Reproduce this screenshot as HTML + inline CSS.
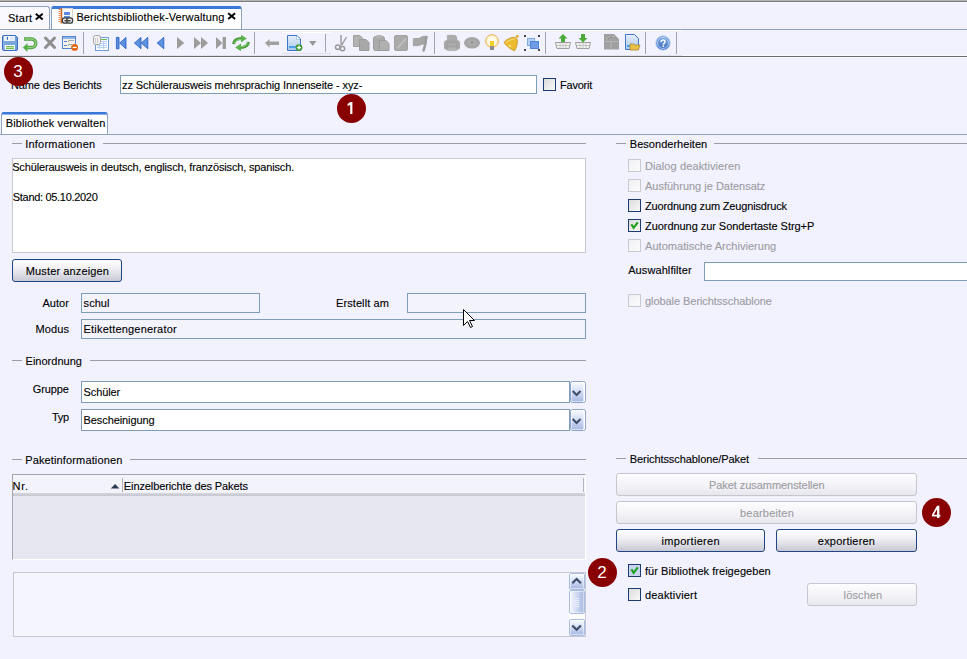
<!DOCTYPE html>
<html><head><meta charset="utf-8">
<style>
html,body{margin:0;padding:0;}
body{width:967px;height:659px;overflow:hidden;position:relative;background:#F2F2FE;font-family:"Liberation Sans",sans-serif;font-size:11px;color:#000;}
.a{position:absolute;}
.t{position:absolute;white-space:nowrap;line-height:13px;font-size:11px;-webkit-text-stroke:0.12px currentColor;}
.dis{color:#9c9ca2;}
.inp{position:absolute;box-sizing:border-box;border:1px solid #7F9DB9;background:#fff;}
.ro{background:#F3F3FC;}
.gl{position:absolute;height:1px;background:#9c9ca4;}
.cb{position:absolute;box-sizing:border-box;width:13px;height:13px;border:1px solid #1C3B6E;background:linear-gradient(135deg,#dcdcdc,#f8f8f8);}
.cbd{border-color:#c9c9d2;background:linear-gradient(135deg,#f0f0f4,#fbfbfd);}
.btn{position:absolute;box-sizing:border-box;border:1px solid #1F4582;border-radius:3px;background:linear-gradient(#ffffff,#f2f2f6 35%,#c9c9d5);}
.btnd{border-color:#c6c6cf;background:linear-gradient(#fdfdff,#f4f4f8 50%,#e7e7ee);color:#8f8f9c;}
.sep{position:absolute;top:32px;width:1px;height:22px;background:#a6a6a6;}
.ic{position:absolute;top:35px;width:16px;height:16px;}
.badge{position:absolute;width:29.5px;height:29.5px;border-radius:50%;background:#880000;}
.dg{position:absolute;color:#fff;font-size:17px;line-height:17px;}
</style></head><body>
<!-- top line -->
<div class="a" style="left:0;top:0;width:967px;height:1px;background:#b5b5b8"></div><div class="a" style="left:0;top:1px;width:967px;height:1px;background:#7b7b7b"></div><div class="a" style="left:0;top:2px;width:967px;height:1px;background:#fbfbff"></div>
<!-- tabs -->
<div class="a" style="left:0;top:6px;width:50px;height:24px;box-sizing:border-box;border:1px solid #8FA4C0;border-left:none;border-bottom:none;border-top-right-radius:3px;background:#F9F9FE"></div>
<div class="a" style="left:51px;top:6px;width:191px;height:24px;box-sizing:border-box;border:1px solid #8FA4C0;border-top:3px solid #3A78D8;border-bottom:none;border-radius:3px 3px 0 0;background:#fff"></div>
<div class="a" style="left:0;top:29px;width:967px;height:1px;background:#8FA3BF"></div>
<!-- toolbar -->
<div class="a" style="left:0;top:30px;width:682px;height:1px;background:#fff"></div>
<div class="a" style="left:0;top:55px;width:682px;height:1px;background:#e2e2ee"></div><div class="a" style="left:682px;top:55px;width:285px;height:1px;background:#fafaff"></div>
<div class="a" style="left:0;top:56px;width:967px;height:1px;background:#6a6a6a"></div>
<div class="a" style="left:0;top:57px;width:967px;height:1px;background:#f8f8ff"></div>

<svg class="a" style="left:0;top:0" width="967" height="60" viewBox="0 0 967 60">
<defs>
<linearGradient id="gdoc" x1="0" y1="0" x2="0" y2="1"><stop offset="0" stop-color="#e6eefa"/><stop offset="1" stop-color="#a9c8ef"/></linearGradient>
<linearGradient id="gblue" x1="0" y1="0" x2="1" y2="0"><stop offset="0" stop-color="#9cc0ee"/><stop offset="1" stop-color="#2e6ad0"/></linearGradient>
</defs>
<!-- frame -->
<rect x="282" y="32" width="49" height="1" fill="#ffffff"/>
<rect x="282" y="53" width="49" height="1" fill="#dcdcea"/>
<!-- separators -->
<g fill="#a4a4a8">
<rect x="83" y="32" width="1" height="22"/>
<rect x="254" y="32" width="1" height="22"/>
<rect x="325" y="34" width="1" height="18"/>
<rect x="434" y="32" width="1" height="22"/>
<rect x="545" y="32" width="1" height="22"/>
<rect x="645" y="32" width="1" height="22"/>
<rect x="676" y="32" width="1" height="22"/>
</g>
<!-- save -->
<path d="M2.5 36.8 Q2.5 35.5 3.8 35.5 H15.5 L17.5 37.5 V49.2 Q17.5 50.5 16.2 50.5 H3.8 Q2.5 50.5 2.5 49.2 Z" fill="#6f9ddc" stroke="#3b6cc0"/>
<rect x="3.5" y="36.5" width="1" height="13" fill="#a8c6ee"/>
<rect x="4" y="36" width="11" height="5" fill="#f2f6fc"/>
<rect x="10" y="36.5" width="5" height="4" fill="#e0eaf8"/>
<rect x="6.8" y="37" width="1.2" height="2.8" fill="#3b6cc0"/>
<rect x="4" y="41" width="12.5" height="4" fill="#7aa4dc"/>
<rect x="4.9" y="45" width="10" height="4.8" fill="#fbfdff"/>
<rect x="6" y="46" width="8" height="1.1" fill="#74bc46"/>
<rect x="6" y="47.1" width="8" height="0.8" fill="#c4e4b4"/>
<rect x="6" y="47.9" width="8" height="1.1" fill="#74bc46"/>
<!-- undo -->
<path d="M24 39 H31.5 A4.25 4.25 0 0 1 31.5 47.5 H26.5" fill="none" stroke="#4e9e40" stroke-width="3.4"/>
<path d="M24.5 39 H31.5 A4.25 4.25 0 0 1 31.5 47.5 H26.5" fill="none" stroke="#8ccf78" stroke-width="1.6"/>
<polygon points="27.5,43 22.8,47.5 27.5,52" fill="#5aae4a"/>
<!-- X -->
<path d="M45.5 38 L54.5 47.5 M54.5 38 L45.5 47.5" stroke="#8e8e8e" stroke-width="3" stroke-linecap="round"/>
<!-- form minus -->
<rect x="62.5" y="36.5" width="13" height="12" fill="#f6f2e8" stroke="#5585d0"/>
<rect x="63" y="37" width="12" height="2" fill="#8fb4e8"/>
<rect x="64" y="41" width="3" height="1" fill="#4f82d8"/>
<rect x="64" y="45" width="3" height="1" fill="#4f82d8"/>
<path d="M68.5 42 V40.5 H74 M68.5 46 V44.5 H72" fill="none" stroke="#a8a8a8"/>
<circle cx="74.6" cy="47.4" r="3.4" fill="#e0620e"/>
<rect x="72.6" y="46.8" width="4" height="1.3" fill="#fff"/>
<!-- table -->
<rect x="95.5" y="37.5" width="13" height="13" fill="#fbfcff" stroke="#6f9fd8"/>
<rect x="100" y="39" width="7" height="1" fill="#6cbc58"/>
<path d="M97 41.5 H107 M97 43.5 H107 M97 45.5 H107 M97 47.5 H107 M99.5 41 V49 M103.5 41 V49" stroke="#a8c6ee" stroke-width="0.8"/>
<rect x="93.5" y="35.5" width="7" height="9" rx="2" fill="#f2f2f2" stroke="#a4a4a4"/>
<path d="M95.5 38 V43 M97.5 38 V43" stroke="#c8c8c8" stroke-width="0.9"/>
<!-- nav -->
<g fill="#5a92de" stroke="#2058c0" stroke-width="0.8" stroke-linejoin="round">
<rect x="116.4" y="37.4" width="2.6" height="11.4"/>
<polygon points="126,37.4 119.6,43 126,48.8"/>
<polygon points="141,37.4 134.4,43 141,48.8"/>
<polygon points="147.8,37.4 141.2,43 147.8,48.8"/>
<polygon points="163.8,37.4 157.2,43 163.8,48.8"/>
</g>
<g fill="#9c9c9c">
<polygon points="177,37 184.2,43 177,49"/>
<polygon points="194,37 201,43 194,49"/>
<polygon points="201,37 208,43 201,49"/>
<polygon points="216,37 222.4,43 216,49"/>
<rect x="222.6" y="37" width="3.4" height="12"/>
</g>
<!-- refresh -->
<path d="M233.6 44.2 C234 40.2 237 38.6 241.6 38.6" fill="none" stroke="#4a9e3e" stroke-width="3"/>
<path d="M234.4 43.6 C234.8 40.6 237.2 39.4 241.6 39.4" fill="none" stroke="#8fd47a" stroke-width="1"/>
<polygon points="241,34.8 246.8,38.6 241,42.4" fill="#5eb24e"/>
<path d="M248.4 41.8 C248 45.8 245 47.4 240.4 47.4" fill="none" stroke="#4a9e3e" stroke-width="3"/>
<path d="M247.6 42.4 C247.2 45.4 244.8 46.6 240.4 46.6" fill="none" stroke="#8fd47a" stroke-width="1"/>
<polygon points="241,43.6 235.2,47.4 241,51.2" fill="#5eb24e"/>
<!-- back arrow -->
<polygon points="265,43 269.5,39 269.5,41.5 279,41.5 279,45 269.5,45 269.5,47.5" fill="#a0a0a0"/>
<!-- doc plus -->
<path d="M287.5 35.5 H297 L300.5 39 V50.5 H287.5 Z" fill="url(#gdoc)" stroke="#3f76c8"/>
<path d="M296.5 36 V39.5 H300" fill="#fff" stroke="#9cc0ee" stroke-width="0.8"/>
<rect x="289" y="46" width="8" height="2" fill="#4aa2ea"/>
<circle cx="299" cy="47.6" r="3.4" fill="#3e9a30"/>
<path d="M299 45.6 V49.6 M297 47.6 H301" stroke="#fff" stroke-width="1.3"/>
<polygon points="309,41 316.5,41 312.75,46" fill="#989898"/>
<!-- scissors -->
<path d="M341 35 V45.5 M346.5 37 L341.5 45.5" stroke="#9a9a9a" stroke-width="1.4"/>
<circle cx="337.7" cy="47.3" r="2.2" fill="none" stroke="#9a9a9a" stroke-width="1.5"/>
<circle cx="342.5" cy="48.6" r="2.2" fill="none" stroke="#9a9a9a" stroke-width="1.5"/>
<!-- copy -->
<path d="M353.5 35.5 H360 L363 38.5 V46.5 H353.5 Z" fill="#b2b2b2" stroke="#a0a0a0"/>
<path d="M359.5 39.5 H366 L369 42.5 V50.5 H359.5 Z" fill="#a8a8a8" stroke="#9a9a9a"/>
<!-- paste -->
<rect x="373.5" y="36.5" width="11" height="14" rx="2" fill="#aaaaaa" stroke="#9c9c9c"/>
<rect x="376" y="35" width="6" height="3" rx="1" fill="#b4b4b4"/>
<path d="M379.5 40.5 H386 L389 43.5 V50.5 H379.5 Z" fill="#b0b0b0" stroke="#9c9c9c"/>
<!-- edit doc -->
<rect x="394.5" y="35.5" width="13" height="15" rx="1.5" fill="#ababab" stroke="#a2a2a2"/>
<path d="M397.5 48 L406 38.5" stroke="#c4c4c4" stroke-width="1.2"/>
<!-- flag -->
<path d="M413.3 38.6 L418.8 38.3 C420.5 37.9 421.2 36.5 423.2 36.2 L427.6 36.4 L425.6 44 L421.6 44.4 C420 44.9 419 45.8 417.5 45.8 L413.2 45.8 Z" fill="#a6a6a6" stroke="#999" stroke-width="0.6"/>
<path d="M425.9 37.4 C426 42 424.8 47 423.6 50.4" fill="none" stroke="#9c9c9c" stroke-width="2.6" stroke-linecap="round"/>
<!-- printer -->
<path d="M447.3 35.3 H453.8 Q456.9 35.3 456.9 38.6 V42.5 H447.3 Z" fill="#acacac" stroke="#9c9c9c" stroke-width="0.6"/>
<rect x="444" y="40.2" width="16" height="9.5" rx="2.6" fill="#a6a6a6"/>
<rect x="447.4" y="42.2" width="9.2" height="4.8" fill="#ababab" stroke="#9a9a9a" stroke-width="0.5"/>
<rect x="447.2" y="47" width="9.6" height="3.6" rx="0.8" fill="#b2b2b2" stroke="#9a9a9a" stroke-width="0.5"/>
<!-- disc -->
<ellipse cx="472" cy="42.8" rx="8" ry="5.8" fill="#a6a6a6"/>
<ellipse cx="472" cy="42.8" rx="5.6" ry="4" fill="#ababab" stroke="#9c9c9c" stroke-width="0.5"/>
<circle cx="472" cy="42.3" r="0.9" fill="#7c7c7c"/>
<!-- bulb -->
<circle cx="492" cy="41" r="6.3" fill="#fff6d0" stroke="#f0a840" stroke-width="1"/>
<circle cx="492" cy="41" r="4.3" fill="#fffbe8"/>
<rect x="490" y="41" width="4" height="5" fill="#f2d028"/>
<rect x="490" y="46" width="4" height="4" fill="#8c8c8c"/>
<!-- bell -->
<path d="M504 42.3 C506.5 39.3 510.5 37.4 514.8 37.2 L517.2 39.4 C517.8 43 516.8 47 514.6 50.8 C511 49.5 506.5 46.5 504 42.3 Z" fill="#ecbc30" stroke="#c89020" stroke-width="0.8"/>
<path d="M506 42.5 C508.5 40.5 511.5 39.3 514.5 39" stroke="#f8e080" stroke-width="1" fill="none"/>
<circle cx="517.3" cy="36.4" r="1.4" fill="#e0a820"/>
<ellipse cx="509.8" cy="46" rx="1.7" ry="1.3" fill="#f4d870"/>
<!-- selection -->
<rect x="527.5" y="38.5" width="7" height="7" fill="#b4d0f4" stroke="#80aae6"/>
<rect x="530.5" y="41.5" width="8" height="7" fill="#6f9ee6" stroke="#4f84d8"/>
<g fill="#444"><rect x="524" y="35" width="2" height="2"/><rect x="538" y="35" width="2" height="2"/><rect x="524" y="49" width="2" height="2"/><rect x="538" y="49" width="2" height="2"/></g>
<!-- basket up -->
<path d="M555.5 42.5 H570.5 L569 48.5 H557 Z" fill="#f4f4f4" stroke="#9c9c9c"/>
<path d="M557 45.5 H569 M560 42.5 V48.5 M563 42.5 V48.5 M566 42.5 V48.5" stroke="#bcbcbc" stroke-width="0.8"/>
<polygon points="563,34 567.5,38.5 565,38.5 565,42 561,42 561,38.5 558.5,38.5" fill="#4caa38"/>
<!-- basket down -->
<path d="M575.5 42.5 H590.5 L589 48.5 H577 Z" fill="#f4f4f4" stroke="#9c9c9c"/>
<path d="M577 45.5 H589 M580 42.5 V48.5 M583 42.5 V48.5 M586 42.5 V48.5" stroke="#bcbcbc" stroke-width="0.8"/>
<polygon points="583,42.5 587.5,38 585,38 585,34 581,34 581,38 578.5,38" fill="#4caa38"/>
<!-- cabinet -->
<path d="M604 34 H614 L619 39 V49.5 H604 Z" fill="#a0a0a0"/>
<path d="M605 41.5 H618 M611 42 V49" stroke="#b8b8b8"/>
<path d="M606 39 C609 37 612 36.5 614 36.5" stroke="#c8c8c8" stroke-width="1"/>
<!-- doc folder -->
<path d="M625.5 34.5 H634.5 L638.5 38.5 V49.5 H625.5 Z" fill="url(#gdoc)" stroke="#3f76c8"/>
<rect x="627" y="45" width="3" height="2" fill="#4aa2ea"/>
<path d="M630 44 H634 L635 45 H640 L638.5 50 H630 Z" fill="#e8c048" stroke="#a88020" stroke-width="0.7"/>
<!-- help -->
<defs><linearGradient id="ghelp" x1="0" y1="0" x2="0" y2="1"><stop offset="0" stop-color="#7aa8e4"/><stop offset="1" stop-color="#3c6fc0"/></linearGradient></defs>
<circle cx="663" cy="43" r="7.1" fill="url(#ghelp)" stroke="#9cc0ec" stroke-width="0.8"/>
<circle cx="663" cy="43" r="5.5" fill="none" stroke="#d8e6f8" stroke-width="0.7"/>
<path d="M661.1 41.9 C661.1 40.6 662 39.9 663.1 39.9 C664.3 39.9 665.1 40.6 665.1 41.7 C665.1 43 663.5 43.2 663.3 44.6" fill="none" stroke="#fff" stroke-width="1.5"/>
<rect x="662.5" y="45.4" width="1.6" height="1.5" fill="#fff"/>
<!-- tab icon -->
<rect x="62.5" y="8.5" width="10" height="15" fill="#fdfdfd" stroke="#d4d4d4"/>
<rect x="60.6" y="8" width="1.4" height="15.5" fill="#d86a20"/>
<g fill="#e08850"><rect x="58.5" y="9" width="2.2" height="1"/><rect x="58.5" y="11" width="2.2" height="1"/><rect x="58.5" y="13" width="2.2" height="1"/><rect x="58.5" y="15" width="2.2" height="1"/><rect x="58.5" y="17" width="2.2" height="1"/><rect x="58.5" y="19" width="2.2" height="1"/><rect x="58.5" y="21" width="2.2" height="1"/></g>
<rect x="64" y="12" width="6" height="3" fill="#5a8ee0"/>
<rect x="64" y="16" width="6" height="2" fill="#5a8ee0"/>
<rect x="62.3" y="17.8" width="6" height="5.4" rx="2.4" fill="#e4e4e4" stroke="#3c3c3c" stroke-width="1.2"/>
<rect x="66.7" y="17.8" width="6" height="5.4" rx="2.4" fill="#e4e4e4" stroke="#3c3c3c" stroke-width="1.2"/>
<rect x="64.5" y="20" width="6" height="1.4" fill="#3c3c3c"/>
<!-- close X -->
<path d="M35.8 13.8 L42.7 19.6 M42.7 13.8 L35.8 19.6" stroke="#000" stroke-width="1.9"/>
<path d="M228.2 13.2 L235.1 19 M235.1 13.2 L228.2 19" stroke="#000" stroke-width="1.9"/>
</svg>

<!-- name row -->
<div class="inp" style="left:120px;top:75px;width:417px;height:19px"></div>
<div class="cb" style="left:543px;top:78px"></div>

<!-- page tab -->
<div class="a" style="left:1px;top:112px;width:107px;height:22px;box-sizing:border-box;border:1px solid #8FA4C0;border-top:2px solid #3A78D8;border-bottom:none;border-radius:3px 3px 0 0;background:#fff;box-shadow:inset 0 1px 0 #8fb3ea"></div>
<div class="a" style="left:0;top:134px;width:967px;height:1px;background:#8FA3BF"></div>

<!-- Informationen -->
<div class="gl" style="left:12px;top:143px;width:10px"></div>
<div class="gl" style="left:103px;top:143px;width:483px"></div>
<div class="a" style="left:12px;top:158px;width:574px;height:95px;box-sizing:border-box;border:1px solid #c8c8d0;background:#fff"></div>
<div class="btn" style="left:12px;top:259px;width:110px;height:23px"></div>

<div class="inp ro" style="left:81px;top:293px;width:179px;height:20px"></div>
<div class="inp ro" style="left:407px;top:293px;width:179px;height:20px"></div>
<div class="inp ro" style="left:81px;top:319px;width:505px;height:20px"></div>

<!-- Einordnung -->
<div class="gl" style="left:12px;top:360px;width:10px"></div>
<div class="gl" style="left:90px;top:360px;width:496px"></div>
<div class="inp" style="left:81px;top:381px;width:489px;height:22px"></div>
<div class="inp" style="left:81px;top:409px;width:489px;height:22px"></div>

<!-- Paketinformationen -->
<div class="gl" style="left:12px;top:459px;width:10px"></div>
<div class="gl" style="left:130px;top:459px;width:456px"></div>
<div class="a" style="left:12px;top:474px;width:574px;height:86px;box-sizing:border-box;border-top:1px solid #a4a4ac;border-left:1px solid #a4a4ac;border-right:1px solid #fff;border-bottom:1px solid #fff;background:#E6E6F0"></div>
<div class="a" style="left:13px;top:475px;width:572px;height:18px;background:#F3F3FC"></div>
<div class="a" style="left:13px;top:493px;width:572px;height:3px;background:linear-gradient(#d6d6de,#c6c6d0)"></div>
<div class="a" style="left:122px;top:478px;width:1px;height:14px;background:#b4b4bc"></div>
<div class="a" style="left:583px;top:478px;width:1px;height:14px;background:#b4b4bc"></div>
<div class="a" style="left:13px;top:572px;width:573px;height:65px;box-sizing:border-box;border:1px solid #c8c8d0;background:#F5F5FE"></div>

<!-- Besonderheiten -->
<div class="gl" style="left:616px;top:143px;width:10px"></div>
<div class="gl" style="left:714px;top:143px;width:253px"></div>
<div class="cb cbd" style="left:628px;top:159px"></div>
<div class="cb cbd" style="left:628px;top:179px"></div>
<div class="cb" style="left:628px;top:199px"></div>
<div class="cb" style="left:628px;top:219px"></div>
<div class="cb cbd" style="left:628px;top:239px"></div>
<div class="inp" style="left:704px;top:262px;width:270px;height:19px"></div>
<div class="cb cbd" style="left:628px;top:294px"></div>

<!-- Berichtsschablone/Paket -->
<div class="gl" style="left:616px;top:458px;width:10px"></div>
<div class="gl" style="left:758px;top:458px;width:209px"></div>
<div class="btn btnd" style="left:616px;top:473px;width:301px;height:23px"></div>
<div class="btn btnd" style="left:616px;top:501px;width:301px;height:23px"></div>
<div class="btn" style="left:616px;top:529px;width:149px;height:23px"></div>
<div class="btn" style="left:776px;top:529px;width:141px;height:23px"></div>
<div class="cb" style="left:628px;top:564px;background:#c8d4f0"></div>
<div class="cb" style="left:628px;top:588px"></div>
<div class="btn btnd" style="left:807px;top:583px;width:110px;height:23px"></div>

<svg class="a" style="left:0;top:0" width="967" height="659" viewBox="0 0 967 659">
<defs>
<linearGradient id="gbtn" x1="0" y1="0" x2="0" y2="1"><stop offset="0" stop-color="#f8faff"/><stop offset="0.45" stop-color="#d4def6"/><stop offset="1" stop-color="#a9b9e2"/></linearGradient>
<linearGradient id="gthumb" x1="0" y1="0" x2="1" y2="0"><stop offset="0" stop-color="#f4f6ff"/><stop offset="1" stop-color="#a9b9e2"/></linearGradient>
</defs>
<!-- combo buttons -->
<g>
<rect x="570.5" y="381.5" width="15" height="21" rx="2" fill="#fff" stroke="#8fa5c9"/>
<rect x="571.5" y="382.5" width="12" height="19" rx="1" fill="url(#gbtn)"/>
<path d="M572.7 391.1 L576.6 395 L580.5 391.1" fill="none" stroke="#3f4d69" stroke-width="2.1"/>
<rect x="570.5" y="409.5" width="15" height="21" rx="2" fill="#fff" stroke="#8fa5c9"/>
<rect x="571.5" y="410.5" width="12" height="19" rx="1" fill="url(#gbtn)"/>
<path d="M572.7 419.1 L576.6 423 L580.5 419.1" fill="none" stroke="#3f4d69" stroke-width="2.1"/>
</g>
<!-- sort triangle -->
<polygon points="110.8,488.5 119.4,488.5 115.1,484" fill="#2c3c50"/>
<!-- scrollbar -->
<rect x="569" y="573" width="16" height="62" fill="#fdfdff"/>
<rect x="569.5" y="573.5" width="15" height="16" rx="1.5" fill="#fff" stroke="#a9bde2"/>
<rect x="570.5" y="574.5" width="13" height="14" fill="url(#gbtn)"/>
<path d="M572.3 583.3 L576.6 579 L580.9 583.3" fill="none" stroke="#3f4d69" stroke-width="2.2"/>
<rect x="569.5" y="590.5" width="15" height="23" rx="1.5" fill="#fff" stroke="#a9bde2"/>
<rect x="570.5" y="591.5" width="13" height="21" fill="url(#gthumb)"/>
<path d="M574 598.5 H579 M574 600.5 H579 M574 602.5 H579 M574 604.5 H579 M574 606.5 H579" stroke="#f4f6ff" stroke-width="0.8"/>
<rect x="569.5" y="619.5" width="15" height="16" rx="1.5" fill="#fff" stroke="#a9bde2"/>
<rect x="570.5" y="620.5" width="13" height="14" fill="url(#gbtn)"/>
<path d="M572.3 625.5 L576.6 629.8 L580.9 625.5" fill="none" stroke="#3f4d69" stroke-width="2.2"/>
<!-- checkmarks -->
<path d="M631.4 224.3 L633.6 227.9 L637.8 222.3" fill="none" stroke="#1fa01f" stroke-width="2.2"/>
<path d="M631.4 569.3 L633.6 572.9 L637.8 567.3" fill="none" stroke="#1fa01f" stroke-width="2.2"/>
<!-- cursor -->
<polygon points="463.5,309.5 463.5,325.5 467.5,321.5 470.5,327.5 472.5,326.5 469.5,320.5 474.5,320.5" fill="#fff" stroke="#000" stroke-linejoin="round"/>
</svg>

<!-- texts -->
<div id="tx0" class="t" style="left:8.00px;top:12px;letter-spacing:0.225px">Start</div>
<div id="tx1" class="t" style="left:76.40px;top:11px;letter-spacing:0.129px">Berichtsbibliothek-Verwaltung</div>
<div id="tx2" class="t" style="left:11.00px;top:79px;letter-spacing:-0.141px">Name des Berichts</div>
<div id="tx3" class="t" style="left:122.00px;top:79px;letter-spacing:-0.088px">zz Schülerausweis mehrsprachig Innenseite - xyz-</div>
<div id="tx4" class="t" style="left:560.00px;top:79px;letter-spacing:-0.225px">Favorit</div>
<div id="tx5" class="t" style="left:5.80px;top:117px;letter-spacing:0.090px">Bibliothek verwalten</div>
<div id="tx6" class="t" style="left:25.20px;top:138px;letter-spacing:0.225px">Informationen</div>
<div id="tx7" class="t" style="left:12.20px;top:161px;letter-spacing:-0.155px">Schülerausweis in deutsch, englisch, französisch, spanisch.</div>
<div id="tx8" class="t" style="left:12.80px;top:191px;letter-spacing:-0.309px">Stand: 05.10.2020</div>
<div id="tx9" class="t" style="left:25.80px;top:265px;letter-spacing:0.129px">Muster anzeigen</div>
<div id="tx10" class="t" style="left:42.40px;top:297px;letter-spacing:0.045px">Autor</div>
<div id="tx11" class="t" style="left:83.60px;top:297px;letter-spacing:0.045px">schul</div>
<div id="tx12" class="t" style="left:336.00px;top:297px;letter-spacing:0.090px">Erstellt am</div>
<div id="tx13" class="t" style="left:35.60px;top:323px;letter-spacing:0.068px">Modus</div>
<div id="tx14" class="t" style="left:83.60px;top:323px;letter-spacing:0.185px">Etikettengenerator</div>
<div id="tx15" class="t" style="left:25.60px;top:355px;letter-spacing:0.000px">Einordnung</div>
<div id="tx16" class="t" style="left:32.80px;top:383px;letter-spacing:-0.108px">Gruppe</div>
<div id="tx17" class="t" style="left:83.60px;top:386px;letter-spacing:-0.135px">Schüler</div>
<div id="tx18" class="t" style="left:52.00px;top:411px;letter-spacing:-0.360px">Typ</div>
<div id="tx19" class="t" style="left:83.60px;top:414px;letter-spacing:-0.097px">Bescheinigung</div>
<div id="tx20" class="t" style="left:25.20px;top:454px;letter-spacing:0.138px">Paketinformationen</div>
<div id="tx21" class="t" style="left:12.60px;top:480px;letter-spacing:0.675px">Nr.</div>
<div id="tx22" class="t" style="left:123.80px;top:480px;letter-spacing:-0.101px">Einzelberichte des Pakets</div>
<div id="tx23" class="t" style="left:629.80px;top:138px;letter-spacing:0.028px">Besonderheiten</div>
<div id="tx24" class="t dis" style="left:645.00px;top:160px;letter-spacing:0.105px">Dialog deaktivieren</div>
<div id="tx25" class="t dis" style="left:645.00px;top:180px;letter-spacing:-0.004px">Ausführung je Datensatz</div>
<div id="tx26" class="t" style="left:645.00px;top:200px;letter-spacing:-0.166px">Zuordnung zum Zeugnisdruck</div>
<div id="tx27" class="t" style="left:645.00px;top:220px;letter-spacing:-0.052px">Zuordnung zur Sondertaste Strg+P</div>
<div id="tx28" class="t dis" style="left:645.00px;top:240px;letter-spacing:0.041px">Automatische Archivierung</div>
<div id="tx29" class="t" style="left:628.20px;top:264px;letter-spacing:0.090px">Auswahlfilter</div>
<div id="tx30" class="t dis" style="left:645.00px;top:295px;letter-spacing:-0.060px">globale Berichtsschablone</div>
<div id="tx31" class="t" style="left:629.80px;top:453px;letter-spacing:-0.086px">Berichtsschablone/Paket</div>
<div id="tx32" class="t dis" style="left:709.00px;top:479px;letter-spacing:-0.059px">Paket zusammenstellen</div>
<div id="tx33" class="t dis" style="left:740.00px;top:507px;letter-spacing:0.200px">bearbeiten</div>
<div id="tx34" class="t" style="left:661.60px;top:535px;letter-spacing:0.297px">importieren</div>
<div id="tx35" class="t" style="left:817.80px;top:535px;letter-spacing:0.216px">exportieren</div>
<div id="tx36" class="t" style="left:645.00px;top:565px;letter-spacing:0.036px">für Bibliothek freigegeben</div>
<div id="tx37" class="t" style="left:645.00px;top:589px;letter-spacing:0.189px">deaktiviert</div>
<div id="tx38" class="t dis" style="left:843.60px;top:589px;letter-spacing:0.120px">löschen</div>
<!-- badges -->
<div class="badge" style="left:3.9px;top:56.5px"></div>
<div class="badge" style="left:336.8px;top:93.8px"></div>
<div class="badge" style="left:587.8px;top:557.8px"></div>
<div class="badge" style="left:921.8px;top:497.6px"></div>
<div class="dg" style="left:13.3px;top:62.5px">3</div>
<svg class="a" style="left:0;top:0" width="967" height="659"><path d="M350.2 102 H352.4 V114 H350.2 V104.9 L347.6 106 V103.9 Z" fill="#fff"/></svg>
<div class="dg" style="left:597.3px;top:563.5px">2</div>
<svg class="a" style="left:0;top:0" width="967" height="659"><path fill-rule="evenodd" d="M937 505.8 H939.4 V514.7 H940.4 V516.6 H939.4 V518.1 H937 V516.6 H931.9 V514.7 Z M937 509.3 L933.8 514.7 H937 Z" fill="#fff"/></svg>
</body></html>
